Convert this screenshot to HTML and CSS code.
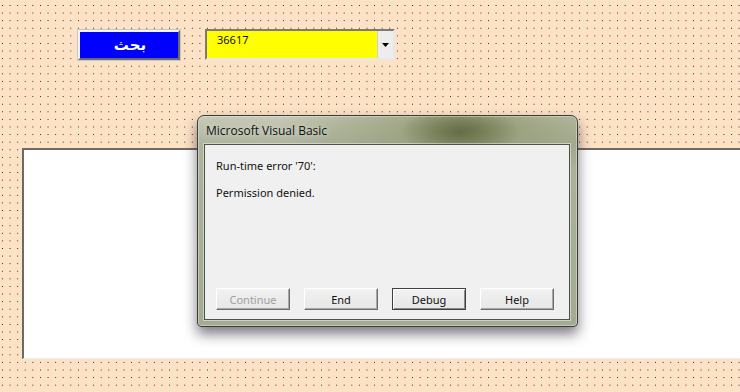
FILE: index.html
```html
<!DOCTYPE html>
<html lang="en">
<head>
    <meta charset="UTF-8">
    <title>UserForm - Run-time error</title>
    <link rel="stylesheet" href="styles.css">
</head>
<body>
    <div class="form">
        <div class="top-row">
            <button class="search-btn" type="button">بحث</button>
            <div class="combo">
                <span class="combo-value">36617</span>
                <span class="combo-drop">
                    <svg width="7" height="4" viewBox="0 0 7 4"><path d="M0 0H7L3.5 4Z" fill="#000"/></svg>
                </span>
            </div>
        </div>

        <div class="list-panel"></div>

        <div class="dialog">
            <div class="dialog-title">Microsoft Visual Basic</div>
            <div class="dialog-body">
                <p class="msg">Run-time error '70':</p>
                <p class="msg">Permission denied.</p>
                <div class="dialog-buttons">
                    <button type="button" class="dlg-btn" disabled>Continue</button>
                    <button type="button" class="dlg-btn">End</button>
                    <button type="button" class="dlg-btn default">Debug</button>
                    <button type="button" class="dlg-btn">Help</button>
                </div>
            </div>
        </div>
    </div>
</body>
</html>
```

FILE: styles.css
```css
* {
    margin: 0;
    padding: 0;
    box-sizing: border-box;
}

body {
    width: 740px;
    height: 392px;
    overflow: hidden;
    background-color: #fde2c6;
    background-image: conic-gradient(at 1px 1px, transparent 75%, #222 0);
    background-size: 7.6px 7.6px;
    background-position: 2px 5px;
    font-family: "Noto Sans", "Open Sans", sans-serif;
}

.form {
    position: relative;
    height: 392px;
    padding-top: 29px;
}

.top-row {
    display: flex;
    align-items: flex-start;
    gap: 25px;
    padding-left: 78px;
}

.search-btn {
    width: 102px;
    height: 30px;
    margin-top: 1px;
    padding-left: 2px;
    background: #0000ff;
    color: #fff;
    font-family: "DejaVu Sans", sans-serif;
    font-weight: bold;
    font-size: 15px;
    border: 2px solid;
    border-color: #f4f4f4 #6a6a6a #6a6a6a #f4f4f4;
    outline: 1px solid #c8c8c8;
}

.combo {
    display: flex;
    width: 190px;
    height: 31px;
    background: #ffff00;
    border: 2px solid;
    border-color: #7a7a7a #e8e8e8 #e8e8e8 #7a7a7a;
}

.combo-value {
    flex: 1;
    font-size: 11px;
    color: #111;
    padding: 1px 0 0 10px;
    line-height: 16px;
}

.combo-drop {
    width: 16px;
    display: flex;
    align-items: center;
    justify-content: center;
    background: #ededed;
    border-left: 1px solid #cfcfcf;
}

.list-panel {
    margin: 88px 0 0 22px;
    height: 211px;
    background: #fff;
    border-top: 2px solid #6e6a66;
    border-left: 2px solid #6e6a66;
    border-bottom: 1px solid #e6eef0;
}

.dialog {
    position: absolute;
    left: 197px;
    top: 115px;
    width: 381px;
    height: 212px;
    border: 1px solid #3b3d35;
    border-radius: 7px 7px 4px 4px;
    background:
        radial-gradient(ellipse 60px 26px at 262px 16px, rgba(96, 104, 64, 0.9), rgba(96, 104, 64, 0) 100%),
        radial-gradient(ellipse 190px 50px at 270px 12px, rgba(140, 148, 108, 0.9), rgba(140, 148, 108, 0) 100%),
        linear-gradient(#c6cab6, #acb29c 30px, #a4ab92);
    box-shadow: 0 7px 13px rgba(40, 30, 50, 0.6), inset 0 0 0 1px rgba(255, 255, 255, 0.35);
    padding: 0 7px 6px 6px;
    display: flex;
    flex-direction: column;
}

.dialog-title {
    height: 28px;
    padding: 6px 0 0 2px;
    font-family: "Open Sans", sans-serif;
    font-size: 12px;
    color: #111;
    text-shadow: 0 0 6px rgba(255, 255, 255, 0.7);
}

.dialog-body {
    flex: 1;
    background: #f0f0f0;
    border: 1px solid #4a5244;
    outline: 1px solid rgba(255, 255, 255, 0.45);
    padding: 13px 0 0 11px;
    display: flex;
    flex-direction: column;
}

.msg {
    font-size: 11px;
    line-height: 15px;
    color: #111;
    margin-bottom: 12px;
}

.dialog-buttons {
    margin-top: auto;
    margin-bottom: 9px;
    display: flex;
    gap: 14px;
}

.dlg-btn {
    width: 74px;
    height: 22px;
    font-family: "Noto Sans", sans-serif;
    font-size: 11px;
    color: #111;
    background: linear-gradient(#f2f2f2, #e6e6e6);
    border: 1px solid;
    border-color: #fff #6e6e6e #6e6e6e #fff;
    box-shadow: inset -1px -1px 0 #a8a8a8;
}

.dlg-btn:disabled {
    color: #a0a0a0;
}

.dlg-btn.default {
    border-color: #404040;
    box-shadow: inset 1px 1px 0 #fff, inset -1px -1px 0 #8a8a8a;
}
```
